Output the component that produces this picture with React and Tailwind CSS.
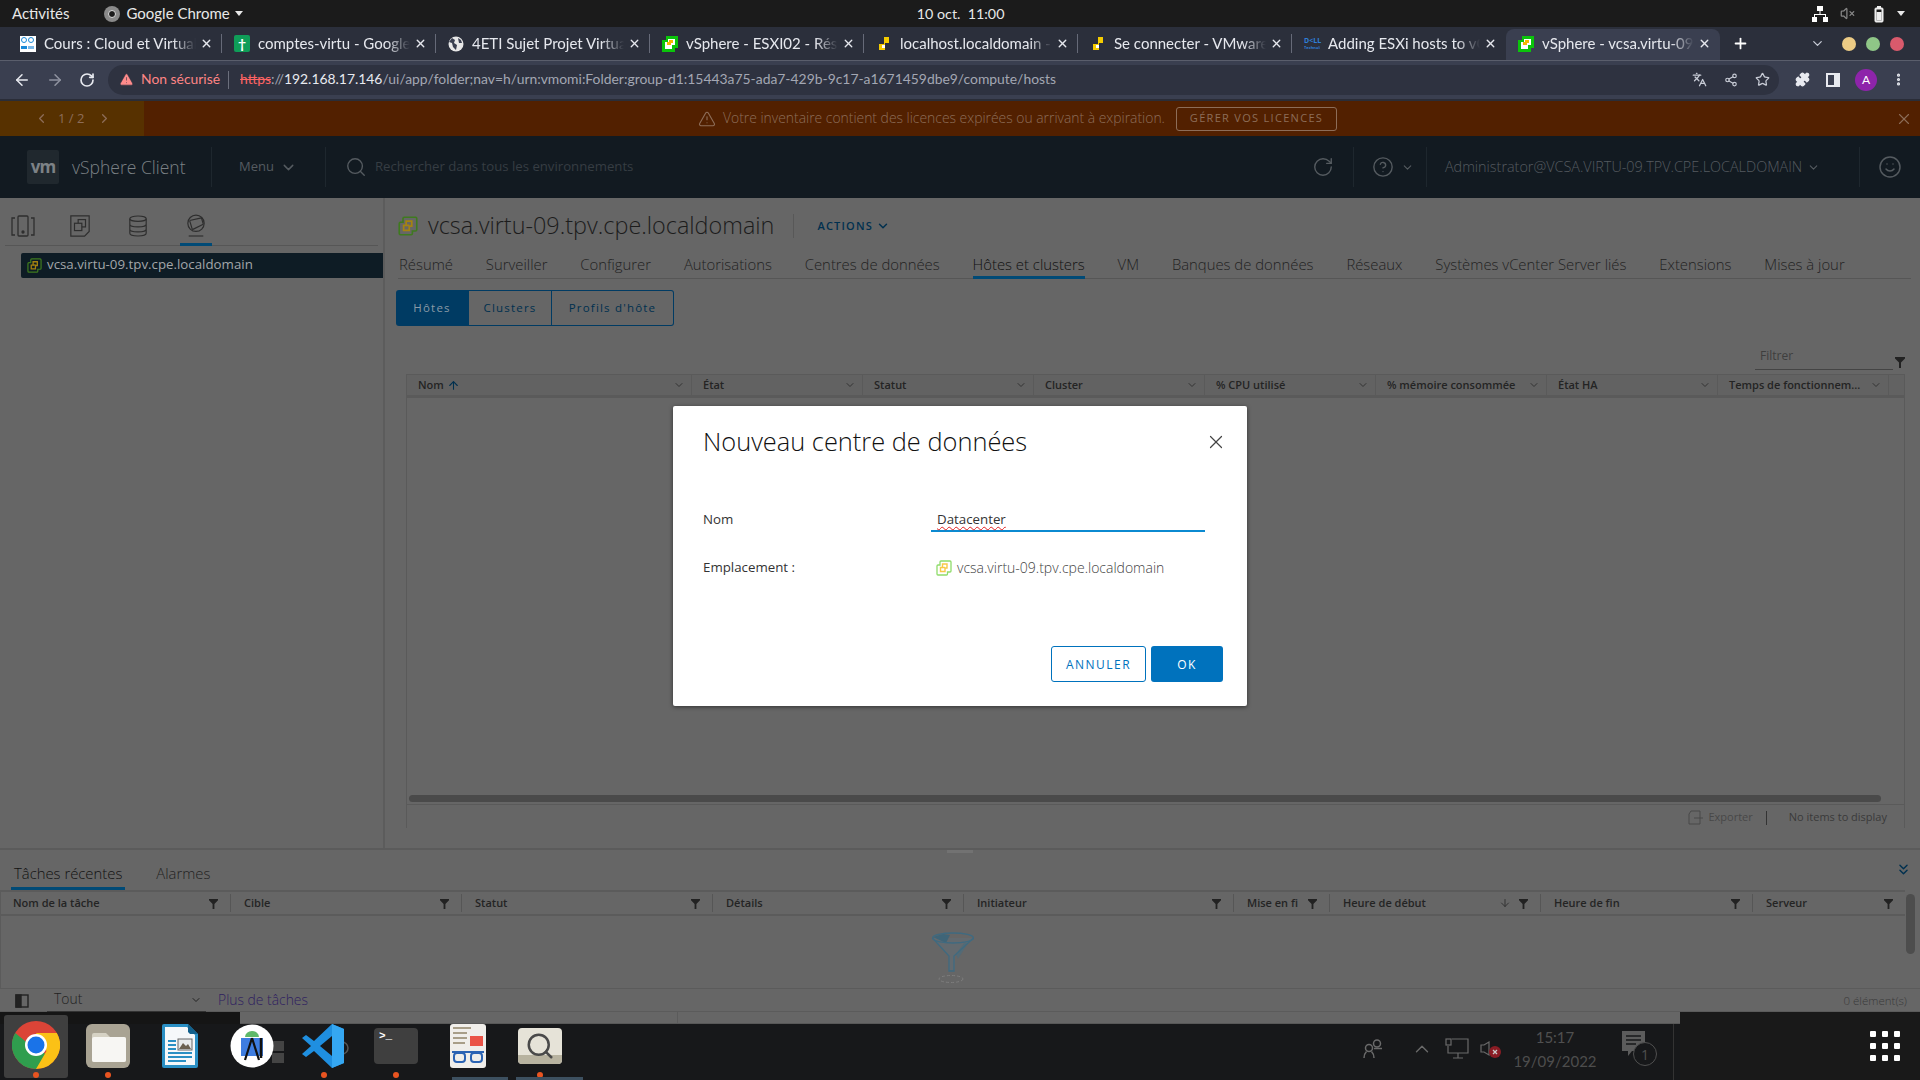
import React from 'react';
import { ChevronDown, ChevronLeft, ChevronRight, ChevronUp, ChevronsDown, X, Plus, ArrowLeft, ArrowRight, RotateCw, Star, Share2, Puzzle, MoreVertical, Search, HelpCircle, Smile, TriangleAlert, ArrowUp, ArrowDown, VolumeX, Languages } from 'lucide-react';

const chrome = { fontFamily: '"Lato","Noto Sans",sans-serif' };
const vs = { fontFamily: '"Open Sans","Noto Sans",sans-serif' };

function VIcon({ s = 16, o = '#22c022', y = '#f5c400', bg = 'none' }) {
  return (
    <svg width={s} height={s} viewBox="0 0 16 16" className="shrink-0">
      <path d="M5 1h9a1 1 0 0 1 1 1v9a1 1 0 0 1-1 1h-2.500v2a1 1 0 0 1-1 1H2a1 1 0 0 1-1-1V6a1 1 0 0 1 1-1h2V2a1 1 0 0 1 1-1z" fill={bg} stroke={o} strokeWidth="1.300" />
      <path d="M6.500 4H11v4H9v3.500H4.500V7.500h2z" fill="none" stroke={y} strokeWidth="1.400" />
      <path d="M6.500 7.500H9" stroke={y} strokeWidth="1.400" />
    </svg>
  );
}

function Fav({ kind }) {
  if (kind === 'cours') return <div className="w-4 h-4 bg-white flex flex-wrap gap-[1px] p-[1px] shrink-0"><span className="w-[6px] h-[6px] border border-[#1a8ad8] rounded-full" /><span className="w-[6px] h-[6px] border border-[#1a8ad8] rounded-full" /><span className="w-[6px] h-[3px] bg-[#1a8ad8]" /><span className="w-[6px] h-[3px] bg-[#7ab8e8]" /></div>;
  if (kind === 'sheet') return <div className="w-4 h-[17px] bg-[#0f9d58] rounded-[2px] flex items-center justify-center shrink-0 text-white text-[14px] font-bold leading-none">†</div>;
  if (kind === 'globe') return <svg width="16" height="16" viewBox="0 0 16 16" className="shrink-0"><circle cx="8" cy="8" r="7.500" fill="#e8e8e8" /><path d="M4 2l3 2-1 3 3 2-1 5-3-3-1-4-3-1zM10 2l3 2 1 3-3 0z" fill="#3a3f50" /></svg>;
  if (kind === 'vs') return <svg width="16" height="16" viewBox="0 0 16 16" className="shrink-0"><path d="M4 0h12v12h-3v4H0V4h4z" fill="#0bc40b" /><path d="M3 6h3V3h7v6h-3v4H3z" fill="#fff" /><path d="M7 4h4v3H9v2H5V6h2z" fill="#f5b800" /></svg>;
  if (kind === 'vm') return <svg width="16" height="16" viewBox="0 0 16 16" className="shrink-0"><path d="M8 1h5v6h-4v2H9v5H3V8h5z" fill="#f5cc00" /><path d="M6 9h3v3H6z" fill="#fff" /></svg>;
  return <div className="w-[16px] h-4 shrink-0 text-[#2f7fd8] text-[7px] leading-[9px] font-bold text-center" style={vs}>D&lt;LL<div className="text-[4px] leading-[5px] whitespace-nowrap overflow-hidden">Technologies</div></div>;
}

const tabs = [
  ['cours', 'Cours : Cloud et Virtualisation'],
  ['sheet', 'comptes-virtu - Google Sheets'],
  ['globe', '4ETI Sujet Projet Virtualisation'],
  ['vs', 'vSphere - ESXI02 - Résumé'],
  ['vm', 'localhost.localdomain - VMware'],
  ['vm', 'Se connecter - VMware ESXi'],
  ['dell', 'Adding ESXi hosts to vCenter'],
  ['vs', 'vSphere - vcsa.virtu-09.tpv'],
];

function TopBar() {
  return (
    <div className="h-[27px] bg-[#1b1b1b] flex items-center text-[#e8e8e8] text-[15px] relative" style={chrome}>
      <span className="ml-[12px]">Activités</span>
      <svg width="16" height="16" viewBox="0 0 16 16" className="ml-[35px]"><circle cx="8" cy="8" r="8" fill="#8a8a8a" /><circle cx="8" cy="8" r="3.500" fill="#1b1b1b" stroke="#ddd" /></svg>
      <span className="ml-[6px]">Google Chrome</span>
      <span className="ml-[5px] w-0 h-0 border-x-[4px] border-x-transparent border-t-[5px] border-t-[#e8e8e8]" />
      <span className="ml-[674px] text-[14.300px]">10 oct.&nbsp; 11:00</span>
      <div className="ml-auto mr-[15px] flex items-center">
        <svg width="16" height="16" viewBox="0 0 16 16" fill="#fff"><rect x="5" y="0" width="6" height="5" /><rect x="0" y="11" width="5" height="5" /><rect x="11" y="11" width="5" height="5" /><path d="M7.500 5h1v3H14v3h-1V9H3v2H2V8h5.500z" /></svg>
        <VolumeX size={15} className="ml-[12px] text-[#888]" />
        <svg width="14" height="18" viewBox="0 0 14 18" className="ml-[17px]"><rect x="3" y="3" width="8" height="14" rx="1" fill="#eee" stroke="#eee" /><rect x="5" y="1" width="4" height="2" fill="#eee" /><rect x="4.500" y="4.500" width="5" height="11" fill="#1b1b1b" /><rect x="4.500" y="7" width="5" height="8.500" fill="#eee" /></svg>
        <span className="ml-[11px] w-0 h-0 border-x-[4px] border-x-transparent border-t-[5px] border-t-[#e8e8e8]" />
      </div>
    </div>
  );
}

function TabStrip() {
  return (
    <div className="h-[33px] bg-[#2b2f3b] flex items-end pl-[8px] text-[15px]" style={chrome}>
      {tabs.map(([k, t], i) => {
        const active = i === tabs.length - 1;
        return (
          <div key={i} className={`w-[214px] h-[31px] shrink-0 flex items-center pl-[12px] pr-[9px] pb-[2px] relative ${active ? 'bg-[#3a3f50] rounded-t-[8px]' : ''}`}>
            <Fav kind={k} />
            <span className="ml-[8px] w-[152px] overflow-hidden whitespace-nowrap text-[#e6e8ee] [mask-image:linear-gradient(90deg,#000_85%,transparent)]">{t}</span>
            <X size={13} strokeWidth={2.500} className="ml-auto text-[#e6e8ee]" />
            {i < 6 && <span className="absolute right-0 top-[5px] h-[19px] w-px bg-[#666a78]" />}
          </div>
        );
      })}
      <Plus size={17} strokeWidth={2.500} className="ml-[12px] mb-[8px] text-white" />
      <ChevronDown size={15} className="ml-[61px] mb-[9px] text-[#c8ccd6]" />
      <span className="ml-[17px] mb-[9px] w-[14px] h-[14px] rounded-full bg-[#eccb85]" />
      <span className="ml-[10px] mb-[9px] w-[14px] h-[14px] rounded-full bg-[#8fc687]" />
      <span className="ml-[10px] mb-[9px] w-[14px] h-[14px] rounded-full bg-[#d95a6c]" />
    </div>
  );
}

function Toolbar() {
  return (
    <div className="h-[39px] bg-[#3a3f50] border-t border-[#5a5e6c] flex items-center pb-[1px] text-[#dfe2ea]" style={chrome}>
      <ArrowLeft size={18} className="ml-[13px] text-[#e8eaf0]" />
      <ArrowRight size={18} className="ml-[15px] text-[#8f93a0]" />
      <RotateCw size={16} strokeWidth={2.500} className="ml-[15px] text-[#e8eaf0]" />
      <div className="ml-[13px] w-[1671px] h-[30px] rounded-full bg-[#2e3240] flex items-center text-[13.900px]">
        <TriangleAlert size={15} fill="#ff8b8b" strokeWidth={1} className="ml-[11px] text-[#2e3240]" />
        <span className="ml-[7px] text-[#ff8585]">Non sécurisé</span>
        <span className="ml-[8px] w-px h-[18px] bg-[#6b6f7c]" />
        <span className="ml-[11px] whitespace-nowrap"><span className="text-[#ff6464] line-through">https</span><span className="text-[#a3a7b3]">://</span><span className="text-[#e8eaf0]">192.168.17.146</span><span className="text-[#a3a7b3]">/ui/app/folder;nav=h/urn:vmomi:Folder:group-d1:15443a75-ada7-429b-9c17-a1671459dbe9/compute/hosts</span></span>
        <div className="ml-auto mr-[9px] flex items-center gap-[17px] text-[#c8ccd6]">
          <Languages size={15} />
          <Share2 size={14} />
          <Star size={15} />
        </div>
      </div>
      <Puzzle size={15} fill="#e8eaf0" className="ml-[16px] text-[#e8eaf0]" />
      <span className="ml-[16px] w-[14px] h-[14px] border-2 border-[#e8eaf0] border-r-[6px]" />
      <span className="ml-[15px] w-[22px] h-[22px] rounded-full bg-[#8e24aa] text-[12px] text-white flex items-center justify-center">A</span>
      <MoreVertical size={15} strokeWidth={3} className="ml-[14px] text-[#e8eaf0]" />
    </div>
  );
}

function Banner() {
  return (
    <div className="h-[37px] bg-[#522000] border-t-[2px] border-[#2a2d38] flex items-center text-[#8d6d58] text-[13px]" style={vs}>
      <div className="w-[144px] h-full bg-[#573100] flex items-center pl-[34px] gap-[9px]">
        <ChevronLeft size={15} />
        <span className="text-[13px]">1 / 2</span>
        <ChevronRight size={15} className="ml-[4px]" />
      </div>
      <TriangleAlert size={18} strokeWidth={1.500} className="ml-[554px]" />
      <span className="ml-[7px] w-[446px] whitespace-nowrap text-[13.900px] font-light">Votre inventaire contient des licences expirées ou arrivant à expiration.</span>
      <span className="ml-[7px] w-[161px] h-[24px] border border-[#8d6d58] rounded-[3px] flex items-center justify-center text-[11px] font-medium tracking-[1.300px] whitespace-nowrap">GÉRER VOS LICENCES</span>
      <X size={18} strokeWidth={1.500} className="ml-auto mr-[7px]" />
    </div>
  );
}

function Header() {
  const div = <span className="block w-px h-[40px] bg-[#1e272e]" />;
  return (
    <div className="h-[62px] bg-[#121a21] flex items-center text-[#555b60]" style={vs}>
      <span className="ml-[27px] w-[32px] h-[34px] rounded-[2px] bg-[#20282e] flex items-center justify-center text-[#7d8286] text-[17px] font-bold tracking-[-1px]">vm</span>
      <span className="ml-[13px] w-[139px] text-[17.500px] font-light text-[#7b8185] whitespace-nowrap">vSphere Client</span>
      {div}
      <span className="ml-[27px] text-[13px]">Menu</span>
      <ChevronDown size={17} className="ml-[6px]" />
      <span className="ml-[28px]">{div}</span>
      <Search size={22} strokeWidth={1.500} className="ml-[19px]" />
      <span className="ml-[8px] w-[937px] whitespace-nowrap text-[13.200px] text-[#363d43]">Rechercher dans tous les environnements</span>
      <RotateCw size={22} strokeWidth={1.500} className="mr-[19px]" />
      {div}
      <HelpCircle size={22} strokeWidth={1.500} className="ml-[18px]" />
      <ChevronDown size={13} className="ml-[7px]" />
      <span className="ml-[12px]">{div}</span>
      <span className="ml-[18px] w-[362px] whitespace-nowrap text-[14.400px] font-light">Administrator@VCSA.VIRTU-09.TPV.CPE.LOCALDOMAIN</span>
      <ChevronDown size={13} />
      <span className="ml-[39px]">{div}</span>
      <Smile size={24} strokeWidth={1.500} className="ml-[18px]" />
    </div>
  );
}

function SideNav() {
  return (
    <div className="w-[385px] shrink-0 border-r-2 border-[#5c5c5c] text-[#2c2c2c]">
      <div className="h-[48px] mx-[5px] border-b border-[#565656] flex items-center pt-[8px] pl-[6px] relative">
        <svg width="24" height="22" viewBox="0 0 24 22" fill="none" stroke="#2e2e2e" strokeWidth="1.300"><rect x="7" y="1" width="10" height="20" rx="1" /><path d="M4 3H1v17h3M20 3h3v17h-3" /><circle cx="12" cy="17" r="1" fill="#2e2e2e" /></svg>
        <svg width="22" height="24" viewBox="0 0 24 24" fill="none" stroke="#2e2e2e" strokeWidth="1.300" className="ml-[34px]"><path d="M2 1h20v17l-5 5H2z" /><rect x="10" y="5" width="8" height="8" /><rect x="6" y="9" width="8" height="8" fill="#666" /></svg>
        <svg width="20" height="24" viewBox="0 0 22 24" fill="none" stroke="#2e2e2e" strokeWidth="1.300" className="ml-[37px]"><ellipse cx="11" cy="4" rx="9" ry="3" /><path d="M2 4v16c0 2 4 3 9 3s9-1 9-3V4M2 10c0 2 4 3 9 3s9-1 9-3M2 15.500c0 2 4 3 9 3s9-1 9-3" /></svg>
        <svg width="20" height="24" viewBox="0 0 22 26" fill="none" stroke="#2e2e2e" strokeWidth="1.300" className="ml-[38px]"><circle cx="11" cy="10" r="9" /><path d="M4 7l13-3M4 7l3 10M7 17l12-6M17 4l2 7" /><path d="M3 24h16" /></svg>
        <span className="absolute left-[175px] -bottom-px w-[32px] h-[3px] bg-[#004a76]" />
      </div>
      <div className="mt-[7px] ml-[21px] h-[25px] bg-[#0e1c25] rounded-l-[2px] flex items-center pl-[6px] pb-[1px] text-[#a2a6a9] text-[13.300px]" style={vs}>
        <VIcon s={15} o="#3f7a1f" y="#a58310" />
        <span className="ml-[5px]">vcsa.virtu-09.tpv.cpe.localdomain</span>
      </div>
    </div>
  );
}

const navs = ['Résumé', 'Surveiller', 'Configurer', 'Autorisations', 'Centres de données', 'Hôtes et clusters', 'VM', 'Banques de données', 'Réseaux', 'Systèmes vCenter Server liés', 'Extensions', 'Mises à jour'];
const cols = ['Nom', 'État', 'Statut', 'Cluster', '% CPU utilisé', '% mémoire consommée', 'État HA', 'Temps de fonctionnem...'];
const taskCols = [['Nom de la tâche', 231], ['Cible', 231], ['Statut', 251], ['Détails', 251], ['Initiateur', 270], ['Mise en fi', 96], ['Heure de début', 211], ['Heure de fin', 212], ['Serveur', 152]];

function Funnel({ s = 10 }) {
  return <svg width={s} height={s + 2} viewBox="0 0 10 12" className="shrink-0"><path d="M0 1h10v1.500L6 6.500V12H4V6.500L0 2.500z" fill="#222" /></svg>;
}

function Content() {
  return (
    <div className="flex-1 min-w-0 flex flex-col text-[#2c2c2c]" style={vs}>
      <div className="h-[56px] flex items-center pl-[13px]">
        <VIcon s={20} o="#3f7a1f" y="#a58310" />
        <span className="ml-[10px] text-[23.400px] font-light text-[#1c1c1c] whitespace-nowrap">vcsa.virtu-09.tpv.cpe.localdomain</span>
        <span className="ml-[19px] w-px h-[24px] bg-[#585858]" />
        <span className="ml-[23px] text-[11px] font-semibold tracking-[1.200px] text-[#00304f]">ACTIONS</span>
        <ChevronDown size={14} strokeWidth={2.500} className="ml-[3px] text-[#00304f]" />
      </div>
      <div className="h-[25px] ml-[13px] mr-[9px] border-b border-[#565656] flex gap-[32.900px] pl-px">
        {navs.map((t, i) => (
          <span key={t} className={`h-[25px] whitespace-nowrap text-[14.850px] font-light leading-[20px] ${i === 5 ? 'border-b-[3px] border-[#004a76] text-[#111]' : 'text-[#222]'}`}>{t}</span>
        ))}
      </div>
      <div className="mt-[11px] ml-[11px] flex h-[36px] w-[278px] text-[11.500px] font-medium tracking-[1.200px] text-[#00304f]">
        <span className="w-[72px] bg-[#003b63] text-[#8a9aa6] rounded-l-[3px] flex items-center justify-center">Hôtes</span>
        <span className="w-[84px] border border-[#003b63] flex items-center justify-center">Clusters</span>
        <span className="w-[122px] border border-l-0 border-[#003b63] rounded-r-[3px] flex items-center justify-center whitespace-nowrap">Profils d'hôte</span>
      </div>
      <div className="mt-[18px] h-[30px] flex items-start justify-end pr-[15px]">
        <div className="w-[138px] h-[26px] border-b border-[#444] text-[12px] text-[#3e3e3e] pl-[5px] leading-[24px]">Filtrer</div>
        <span className="mt-[12px] ml-[2px]"><Funnel /></span>
      </div>
      <div className="ml-[21px] mr-[15px] h-[24px] flex bg-[#626262] border border-[#5a5a5a] border-b-[3px] text-[11px] font-semibold text-[#242424]">
        {cols.map((c, i) => (
          <div key={c} className={`h-full flex items-center pl-[11px] pr-[6px] border-r border-[#5a5a5a] whitespace-nowrap ${i === 0 ? 'w-[285px]' : 'w-[171px]'}`}>
            <span>{c}</span>
            {i === 0 && <ArrowUp size={13} className="ml-[3px] text-[#00304f]" />}
            <ChevronDown size={12} className="ml-auto text-[#333]" />
          </div>
        ))}
      </div>
      <div className="ml-[21px] mr-[15px] h-[406px] border-x border-[#5a5a5a] flex flex-col justify-end">
        <div className="mx-[2px] mb-[2px] h-[7px] w-[1472px] bg-[#4a4a4a] rounded-full" />
      </div>
      <div className="ml-[21px] mr-[15px] h-[24px] flex items-center justify-end pt-[2px] text-[11px] text-[#3a3a3a] border-x border-t border-[#5a5a5a]">
        <svg width="15" height="15" viewBox="0 0 15 15" fill="none" stroke="#484848"><path d="M3 1h9v13H1V4zM6 8h9" /></svg>
        <span className="ml-[5px] text-[#484848]">Exporter</span>
        <span className="ml-[13px] h-[14px] w-px bg-[#333]" />
        <span className="ml-[22px] mr-[17px]">No items to display</span>
      </div>
    </div>
  );
}

function Tasks() {
  return (
    <div className="text-[#2c2c2c]" style={vs}>
      <div className="h-[42px] border-t-2 border-[#5b5b5b] relative flex items-end pl-[11px] text-[14.850px] font-light">
        <span className="absolute left-[947px] top-0 w-[26px] h-[3px] bg-[#727272]" />
        <span className="h-[28px] px-[3px] border-b-[3px] border-[#004a76] text-[#111] whitespace-nowrap">Tâches récentes</span>
        <span className="ml-[31px] h-[28px] text-[#222]">Alarmes</span>
        <ChevronsDown size={17} className="absolute right-[8px] top-[11px] text-[#00304f]" />
      </div>
      <div className="flex">
        <div className="w-[1905px] shrink-0 h-[98px] flex flex-col border-l border-[#5b5b5b]">
          <div className="h-[26px] shrink-0 flex items-center border-y-2 border-[#5b5b5b] text-[11px] font-semibold text-[#242424] -ml-px">
            {taskCols.map(([c, w], i) => (
              <div key={c} className="h-[18px] flex items-center pl-[13px] pr-[12px] border-r border-[#565656] last:border-r-0 whitespace-nowrap" style={{ width: w }}>
                <span>{c}</span>
                {i === 6 && <ArrowDown size={12} className="ml-auto mr-[8px] text-[#333]" />}
                <span className={i === 6 ? '' : 'ml-auto'}><Funnel s={9} /></span>
              </div>
            ))}
          </div>
          <div className="flex-1 flex justify-center pt-[16px]">
            <svg width="46" height="56" viewBox="0 0 46 56" fill="none">
              <path d="M2 6L19 24v14h6V24L44 6z" fill="#5f7480" fillOpacity="0.350" />
              <path d="M13 2L3 5l13 6 4-8z" fill="#3f6578" />
              <path d="M38 11L28 27l-2-5 8-11z" fill="#536a76" />
              <ellipse cx="23" cy="6" rx="20.500" ry="5" stroke="#3f6a80" strokeWidth="1.300" />
              <path d="M2.500 6L19 24v15h5V24L43.500 6" stroke="#3f6a80" strokeWidth="1.300" />
              <ellipse cx="21" cy="47" rx="12" ry="3.500" stroke="#7d7d7d" strokeWidth="1" strokeDasharray="3 2" />
            </svg>
          </div>
        </div>
        <div className="w-[15px] h-[98px] relative"><span className="absolute left-[1px] top-[4px] w-[9px] h-[60px] bg-[#4d4d4d] rounded-full" /></div>
      </div>
      <div className="h-[24px] border-y border-[#5b5b5b] flex items-center text-[13.900px] font-light">
        <svg width="14" height="14" viewBox="0 0 14 14" className="ml-[15px] mt-[2px]" fill="none" stroke="#222" strokeWidth="1.400"><rect x="1" y="1" width="12" height="12" /><rect x="1" y="1" width="5" height="12" fill="#222" /></svg>
        <div className="ml-[18px] w-[159px] h-[23px] border-b border-[#333] flex items-center pl-[7px] text-[#222]">Tout<ChevronDown size={12} className="ml-auto mr-[4px]" /></div>
        <span className="ml-[12px] text-[#2e2060]">Plus de tâches</span>
        <span className="ml-auto mr-[13px] text-[11.500px] mt-[2px] text-[#3a3a3a]">0 élément(s)</span>
      </div>
    </div>
  );
}

function DockItem({ children, dot }) {
  return (
    <div className="w-[72px] shrink-0 h-[56px] flex flex-col items-center relative">
      <div className="h-[44px] flex items-center justify-center">{children}</div>
      {dot && <span className="absolute top-[48px] w-[6px] h-[6px] rounded-full bg-[#e95420]" />}
    </div>
  );
}

function ChromeLogo() {
  return (
    <svg width="48" height="48" viewBox="0 0 48 48" className="relative -mt-[2px]">
      <circle cx="24" cy="24" r="24" fill="#db4437" />
      <path d="M24 24L3.200 36A24 24 0 0 0 24 48l12-12z" fill="#2f9e4e" />
      <path d="M3.200 12A24 24 0 0 0 3.200 36L24 48l6-12-12-12z" fill="#2f9e4e" />
      <path d="M24 12h20.800A24 24 0 0 1 24 48l10.500-18z" fill="#fbc116" />
      <circle cx="24" cy="24" r="11" fill="#fff" />
      <circle cx="24" cy="24" r="8.500" fill="#1a73e8" />
    </svg>
  );
}

function Dock() {
  return (
    <div className="h-[68px] flex relative" style={vs}>
      <div className="w-[1680px] flex flex-col">
        <div className="h-[12px] flex">
          <div className="w-[240px] bg-[#151515]" />
          <div className="flex-1 bg-[#666] border-b border-[#585858]"><span className="block ml-[437px] h-[11px] w-px bg-[#5b5b5b]" /></div>
        </div>
        <div className="flex-1 bg-[#17181a] flex relative">
          <div className="absolute left-[4px] -top-[9px] w-[64px] h-[63px] rounded-[3px] bg-[#3f3f3f]" />
          <DockItem dot><ChromeLogo /></DockItem>
          <DockItem dot>
            <svg width="44" height="44" viewBox="0 0 44 44"><rect width="44" height="44" rx="6" fill="#a9a393" /><path d="M6 11a2 2 0 0 1 2-2h12l4 4h14a2 2 0 0 1 2 2v21a2 2 0 0 1-2 2H8a2 2 0 0 1-2-2z" fill="#d6d2c4" /><rect x="6" y="13" width="34" height="25" rx="2" fill="#f7f6f3" /></svg>
          </DockItem>
          <DockItem>
            <svg width="36" height="44" viewBox="0 0 36 44"><path d="M2 0h24l10 10v32a2 2 0 0 1-2 2H2a2 2 0 0 1-2-2V2a2 2 0 0 1 2-2z" fill="#2a8fc4" /><path d="M3 3h22l8 8v30H3z" fill="#f6f8fa" /><path d="M26 0l10 10h-8l-2-2z" fill="#12608c" /><path d="M6 16h8v2H6zM6 20h8v2H6zM6 24h8v2H6zM6 28h24v2H6zM6 32h24v2H6zM6 36h18v2H6z" fill="#2a8fc4" /><rect x="16" y="15" width="14" height="11" fill="#e8eaec" stroke="#666" /><path d="M17 25l4-6 3 3 2-2 3 5z" fill="#6a5f50" /></svg>
          </DockItem>
          <DockItem>
            <div className="relative w-[44px] h-[44px]">
              <span className="absolute left-[42px] top-[17px] w-[12px] h-[10px] bg-[#444]" />
              <span className="absolute left-[42px] top-[29px] w-[12px] h-[10px] bg-[#444]" />
              <svg width="44" height="44" viewBox="0 0 44 44" className="absolute left-0 top-0"><circle cx="22" cy="22" r="21.500" fill="#fff" /><path d="M15 13a7 6 0 0 1 14 0z" fill="#5fb96a" /><path d="M11 14h22v18H11z" fill="#3e7de0" /><path d="M22 14l-7 22M22 14l7 22" stroke="#111" strokeWidth="2.200" /><path d="M31 14v20" stroke="#111" strokeWidth="2.500" /></svg>
            </div>
          </DockItem>
          <DockItem dot>
            <svg width="50" height="44" viewBox="0 0 50 44" className="ml-[6px]"><circle cx="40" cy="24" r="6" fill="none" stroke="#555" strokeWidth="1.500" /><path d="M30 0l12 5v34l-12 5L12 27l-8 6-4-3 9-8-9-8 4-3 8 6z" fill="#1f8fe0" /><path d="M30 0l12 5v34l-12 5z" fill="#35a7f2" /><path d="M30 12L18 22l12 10z" fill="#17181a" /></svg>
          </DockItem>
          <DockItem dot>
            <div className="w-[44px] h-[36px] rounded-[4px] bg-[#3f3f3f] text-white text-[11px] font-bold pl-[5px] pt-[3px] leading-[10px] relative" style={{ fontFamily: '"Liberation Mono",monospace' }}>&gt;_</div>
          </DockItem>
          <DockItem>
            <div className="relative w-[36px] h-[44px] bg-[#f0eeea] rounded-[3px] flex flex-col gap-[3px] p-[3px]">
              <span className="h-[2px] w-[18px] bg-[#a89e88]" /><span className="h-[2px] w-[14px] bg-[#a89e88]" /><span className="h-[2px] w-[14px] bg-[#a89e88]" /><span className="h-[2px] w-[12px] bg-[#a89e88]" />
              <span className="absolute right-[3px] top-[12px] w-[13px] h-[10px] bg-[#ea5347]" />
              <svg width="32" height="14" viewBox="0 0 32 14" className="absolute left-[2px] bottom-[3px]" fill="none" stroke="#2b63b3" strokeWidth="2"><path d="M0 1h32" /><rect x="2" y="2" width="11" height="9" rx="3" /><rect x="19" y="2" width="11" height="9" rx="3" /></svg>
            </div>
          </DockItem>
          <DockItem dot>
            <div className="relative w-[44px] h-[36px] rounded-[4px] bg-[#e6e3d8] flex items-center justify-center overflow-hidden">
              <span className="absolute left-0 right-0 bottom-0 h-[9px] bg-[#b8b3a0]" />
              <Search size={30} strokeWidth={2} className="text-[#4a4a4a] relative" />
            </div>
          </DockItem>
          <span className="absolute bottom-0 left-[452px] w-[56px] h-[3px] bg-[#3d5060]" />
          <span className="absolute bottom-0 left-[516px] w-[67px] h-[3px] bg-[#3d5060]" />
          <div className="ml-auto mr-[22px] h-[50px] flex items-center text-[#5a5a5a]">
            <svg width="22" height="20" viewBox="0 0 22 20" fill="none" stroke="#6a6a6a" strokeWidth="1.500"><circle cx="7" cy="9" r="3.500" /><circle cx="15" cy="4.500" r="3.500" /><path d="M2 19c0-4 1-5 2.500-6.500M12 19c0-4-1-5-2.500-6.500M12 9.500h8" /></svg>
            <ChevronUp size={22} strokeWidth={1.500} className="ml-[27px] text-[#6a6a6a]" />
            <svg width="24" height="22" viewBox="0 0 24 22" fill="none" stroke="#6a6a6a" strokeWidth="1.200" className="ml-[12px]"><path d="M7 1h16v14H3V8" /><rect x="1" y="1" width="5" height="6" /><path d="M13 15v5M8 20h10" /></svg>
            <svg width="22" height="20" viewBox="0 0 22 20" className="ml-[11px]" fill="none"><path d="M8 3L3 6H0v7h3l5 3z" stroke="#6a6a6a" strokeWidth="1.200" transform="translate(1 0)" /><circle cx="15" cy="13" r="6" fill="#8a1c24" /><path d="M13 11l4 4M17 11l-4 4" stroke="#ccc" strokeWidth="1.300" /></svg>
            <div className="ml-[11px] w-[84px] text-center text-[#505050] text-[15px] leading-[24px]" style={chrome}>
              <div>15:17</div>
              <div className="text-[#4d4d4d]">19/09/2022</div>
            </div>
            <div className="ml-[25px] relative w-[36px] h-[36px]">
              <svg width="24" height="28" viewBox="0 0 24 28" className="absolute left-0 top-0"><path d="M0 0h23v20H10l-4 5v-5H0z" fill="#5c5c5c" /><path d="M4 5h15M4 9h15M4 13h10" stroke="#17181a" strokeWidth="1.500" /></svg>
              <span className="absolute left-[11px] top-[11px] w-[24px] h-[24px] rounded-full bg-[#17181a] border border-[#505050] text-[#505050] text-[14px] flex items-center justify-center">1</span>
            </div>
          </div>
          <span className="absolute right-[6px] top-0 bottom-0 w-px bg-[#333]" />
        </div>
      </div>
      <div className="flex-1 bg-[#191919] flex justify-end items-start pr-[20px] pt-[19px]">
        <div className="grid grid-cols-3 gap-[6px]">
          {[0, 1, 2, 3, 4, 5, 6, 7, 8].map(i => <span key={i} className="w-[6px] h-[6px] bg-white rounded-[1px]" />)}
        </div>
      </div>
    </div>
  );
}

function Modal() {
  return (
    <div className="absolute left-[673px] top-[406px] w-[574px] h-[300px] bg-white rounded-[2px] shadow-[0_1px_4px_rgba(0,0,0,0.5)] flex flex-col pl-[30px] pr-[24px]" style={vs}>
      <div className="mt-[17px] flex items-center justify-between h-[36px]">
        <span className="text-[25.400px] font-light text-[#111] whitespace-nowrap">Nouveau centre de données</span>
        <X size={22} strokeWidth={1.300} className="-mr-[4px] mt-[2px] text-[#444]" />
      </div>
      <div className="mt-[47px] flex items-start h-[28px] text-[13.300px] text-[#333]">
        <span className="w-[228px] leading-[26px]">Nom</span>
        <div className="w-[274px] h-[26px] border-b-2 border-[#0b8ad1] pl-[6px] leading-[26px]"><span className="underline decoration-wavy decoration-[#e02020] decoration-1 underline-offset-2">Datacenter</span></div>
      </div>
      <div className="mt-[22px] flex items-center h-[24px] text-[13.300px] text-[#333]">
        <span className="w-[233px]">Emplacement :</span>
        <VIcon s={16} o="#8fdc6a" y="#f7c948" />
        <span className="ml-[5px] mb-[2px] text-[14px] font-light text-[#444]">vcsa.virtu-09.tpv.cpe.localdomain</span>
      </div>
      <div className="mt-auto mb-[24px] flex justify-end gap-[5px] text-[12px] font-medium tracking-[1.500px]">
        <span className="w-[95px] h-[36px] pt-[2px] border border-[#0072bd] rounded-[3px] text-[#0072bd] flex items-center justify-center">ANNULER</span>
        <span className="w-[72px] h-[36px] pt-[2px] bg-[#0072bd] rounded-[3px] text-white flex items-center justify-center">OK</span>
      </div>
    </div>
  );
}

export default function App() {
  return (
    <div className="w-[1920px] h-[1080px] overflow-hidden flex flex-col relative bg-[#666666]">
      <TopBar />
      <TabStrip />
      <Toolbar />
      <Banner />
      <Header />
      <div className="h-[650px] flex shrink-0">
        <SideNav />
        <Content />
      </div>
      <Tasks />
      <div className="flex-1 min-h-0"><Dock /></div>
      <Modal />
    </div>
  );
}
